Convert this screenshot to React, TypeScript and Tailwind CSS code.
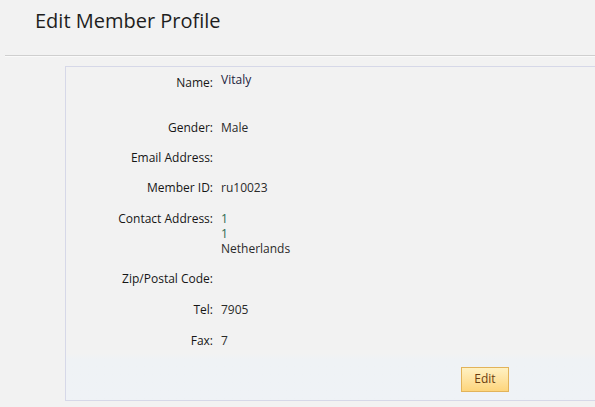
const rows: { label: string; value: string[]; h: string; color?: string }[] = [
  { label: "Name:", value: ["Vitaly"], h: "h-[45px]", color: "text-[#1d2440]" },
  { label: "Gender:", value: ["Male"], h: "h-[30px]" },
  { label: "Email Address:", value: [], h: "h-[30px]" },
  { label: "Member ID:", value: ["ru10023"], h: "h-[31px]" },
  { label: "Contact Address:", value: ["1", "1", "Netherlands"], h: "h-[60px]" },
  { label: "Zip/Postal Code:", value: [], h: "h-[31px]" },
  { label: "Tel:", value: ["7905"], h: "h-[31px]" },
  { label: "Fax:", value: ["7"], h: "h-[20px]" },
];

export default function App() {
  return (
    <div
      className="h-[407px] w-[595px] overflow-hidden bg-[#f2f2f2] text-[#222]"
      style={{ fontFamily: '"Open Sans", "Noto Sans", sans-serif' }}
    >
      <h1 className="pl-[35px] pt-[8px] text-[20px] leading-[26px] text-[#1e1e1e]">Edit Member Profile</h1>

      <div className="ml-[5px] mt-[21px] h-px bg-[#cfcfcf]" />
      <div className="ml-[5px] h-px bg-[#fafafa]" />

      <div className="ml-[65px] mt-[9px] w-[700px] border border-[#d6d8e8] bg-[#f2f2f2]">
        <div className="pt-[8px]">
          {rows.map((r) => (
            <div key={r.label} className={`flex ${r.h}`}>
              <div className="w-[147px] shrink-0 text-right text-[12px] leading-[15px] text-[#161616]">
                {r.label}
              </div>
              <div
                className={`pl-[8px] text-[12px] leading-[15px] ${
                  r.label === "Name:" ? "-mt-[3px]" : ""
                }`}
              >
                {r.value.map((v, i) => (
                  <div
                    key={i}
                    className={
                      r.label === "Contact Address:" && i < 2
                        ? "text-[#2c6a50]"
                        : r.color ?? "text-[#2a2a2a]"
                    }
                  >
                    {v}
                  </div>
                ))}
              </div>
            </div>
          ))}
        </div>

        <div className="h-[47px] bg-gradient-to-b from-[#f2f2f2] via-[#eff2f5] via-[15%] to-[#eff2f6] pl-[395px] pt-[12px]">
          <button
            type="button"
            className="h-[25px] w-[48px] border border-[#e2b35a] bg-gradient-to-b from-[#fff1c2] to-[#fdd57c] text-[12px] leading-[22px] text-[#6a3d10]"
          >
            Edit
          </button>
        </div>
      </div>
    </div>
  );
}
